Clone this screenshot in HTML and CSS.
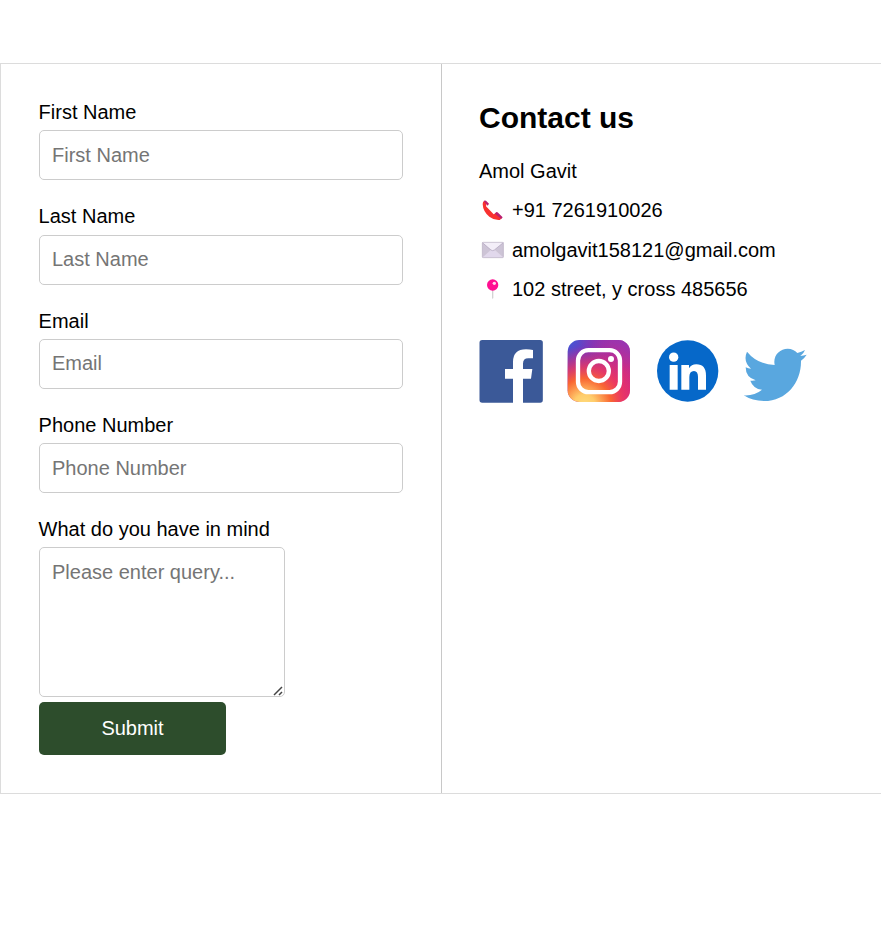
FILE: index.html
```html
<!DOCTYPE html>
<html lang="en">
<head>
<meta charset="utf-8">
<title>Contact us</title>
<link rel="stylesheet" href="styles.css">
</head>
<body>
<main class="contact">
  <form class="form">
    <div class="field"><label for="first">First Name</label><input id="first" type="text" placeholder="First Name"></div>
    <div class="field"><label for="last">Last Name</label><input id="last" type="text" placeholder="Last Name"></div>
    <div class="field"><label for="email">Email</label><input id="email" type="email" placeholder="Email"></div>
    <div class="field"><label for="phone">Phone Number</label><input id="phone" type="text" placeholder="Phone Number"></div>
    <div class="query">
      <label for="query">What do you have in mind</label><textarea id="query" placeholder="Please enter query..."></textarea>
      <svg class="grip" viewBox="0 0 10 10"><path d="M1 9L9 1M6 9L9 6" fill="none" stroke="#444" stroke-width="1.500"/></svg>
    </div>
    <button class="submit" type="button">Submit</button>
  </form>
  <section class="info">
    <h1>Contact us</h1>
    <p>Amol Gavit</p>
    <p>
      <svg class="mark" viewBox="30 20 81 78"><path d="M43 31L50 40 48 48 71 72 78 67 95 82 90 89Q74 91 58 79 39 64 38 41 38 33 43 31Z" fill="#f8312f"/><path d="M41 32Q44 29 48 31L57 40 53 46ZM78 66Q81 64 85 68L98 81 94 86 75 70Z" fill="#ba1f70"/></svg>
      <span>+91 7261910026</span>
    </p>
    <p>
      <svg class="mark" viewBox="30 141 81 78"><rect x="36" y="156" width="65" height="48" rx="3" fill="#e0d8e8"/><path d="M38 202L62 180H75L100 202V159L69 184 37 159Z" fill="#cdc4d6"/><path d="M38 203L68 179 99 203Z" fill="#e1d8ec"/><path d="M37 157H100L73 180Q68 184 63 180Z" fill="#f3eef8"/><path d="M37 158L63 180Q68 184 73 180L100 158" fill="none" stroke="#ab9fb8" stroke-width="2"/><rect x="37" y="157" width="63" height="46" rx="3" fill="none" stroke="#beb5c5" stroke-width="2"/></svg>
      <span>amolgavit158121@gmail.com</span>
    </p>
    <p>
      <svg class="mark" viewBox="30 257 81 78"><path d="M66 298H70V322L68 327 66 322Z" fill="#d3d3d3"/><circle cx="68" cy="284" r="17" fill="#ff0f91"/><circle cx="73" cy="279" r="5" fill="#ffd8ed"/></svg>
      <span>102 street, y cross 485656</span>
    </p>
    <div class="social">
      <svg viewBox="27 27 192 192"><rect x="28.500" y="30" width="190" height="188" rx="8" fill="#3b5998"/><path d="M129 219V146H105V117H129V96Q129 58 168 58 180 58 189 60V85H175Q159 85 159 101V117H187L183 146H159V219Z" fill="#fff"/></svg>
      <svg viewBox="36 27 192 192">
        <defs>
          <linearGradient id="base" x1="0" y1="0" x2="1" y2="1"><stop offset="0" stop-color="#3b5bd8"/><stop offset=".22" stop-color="#7138bf"/><stop offset=".5" stop-color="#b92c91"/><stop offset=".72" stop-color="#df2873"/><stop offset="1" stop-color="#d92a7d"/></linearGradient>
          <linearGradient id="corner" x1=".55" y1=".45" x2="1" y2="0"><stop offset="0" stop-color="#c42d92" stop-opacity="0"/><stop offset="1" stop-color="#8c38bd"/></linearGradient>
          <radialGradient id="glow" cx=".27" cy="1.05" r=".95"><stop offset="0" stop-color="#ffdc7d"/><stop offset=".18" stop-color="#ffcc6b"/><stop offset=".45" stop-color="#f96632"/><stop offset=".65" stop-color="#ef3c5c" stop-opacity=".75"/><stop offset="1" stop-color="#d42c7f" stop-opacity="0"/></radialGradient>
        </defs>
        <rect x="38" y="30" width="187" height="186" rx="35" fill="url(#base)"/><rect x="38" y="30" width="187" height="186" rx="35" fill="url(#corner)"/><rect x="38" y="30" width="187" height="186" rx="35" fill="url(#glow)"/>
        <rect x="69" y="60.500" width="126" height="126" rx="31" fill="none" stroke="#fff" stroke-width="13"/><circle cx="131.500" cy="123" r="30" fill="none" stroke="#fff" stroke-width="13"/><circle cx="168" cy="87" r="9" fill="#fff"/>
      </svg>
      <svg viewBox="30 27 192 192"><circle cx="128" cy="123" r="92" fill="#0668c9"/><g fill="#fff"><circle cx="86" cy="81.500" r="14"/><path d="M74 105H98V179H74ZM109 105H132V115Q139 103 154 103 183 103 183 137V179H159V141Q159 123 147 123 133 123 133 141V179H109Z"/></g></svg>
      <svg viewBox="39 27 192 192"><path d="M51 65Q82 103 134 105C128 77 149 56 173 56 185 56 195 61 202 69Q214 66 225 60 221 71 211 78 221 77 230 74 224 84 213 92C214 156 171 213 102 213Q67 213 41 196 73 198 96 179 70 177 61 152 70 153 77 151 47 142 47 112 55 116 63 116 38 94 51 65Z" fill="#59a7df"/></svg>
    </div>
  </section>
</main>
</body>
</html>
```
FILE: styles.css
```css
* { box-sizing: border-box; }
body {
  margin: 0;
  padding-top: 63px;
  background: #fff;
  color: #000;
  font: 20px/23px "Liberation Sans", Arial, sans-serif;
}
.contact {
  display: grid;
  grid-template-columns: 441px 1fr;
  height: 731px;
  border: 1px solid #dcdcdc;
  border-right: 0;
}
.form {
  padding: 37px 38px 0;
  border-right: 1px solid #c8c8c8;
}
.field { height: 104.3px; }
label { display: block; margin: 0 0 6.3px -.4px; }
input, textarea {
  display: block;
  border: 1px solid #ccc;
  border-radius: 5px;
  background: #fff;
  font: inherit;
  padding: 12px;
}
input { width: 364px; height: 50px; }
.query { position: relative; width: 246px; }
textarea { width: 246px; height: 150px; padding-top: 13px; resize: none; }
.grip { position: absolute; right: 2px; bottom: 1px; width: 10px; height: 10px; }
input::placeholder, textarea::placeholder { color: #757575; }
.submit {
  width: 187px;
  height: 53px;
  margin-top: 5px;
  border: 0;
  border-radius: 5px;
  background: #2d4d2c;
  color: #fff;
  font: inherit;
}
.info { padding: 36px 37px 0; }
h1 { margin: 0 0 24px; font-size: 30px; line-height: 36px; }
p {
  display: flex;
  align-items: center;
  margin: 0 0 16.3px;
}
.mark { width: 27px; height: 26px; margin: -2px 3px -1px 1px; }
.mark + span { padding-left: 2px; }
.social { display: flex; gap: 24px; margin-top: 38px; }
.social svg { width: 64px; height: 64px; }
```
